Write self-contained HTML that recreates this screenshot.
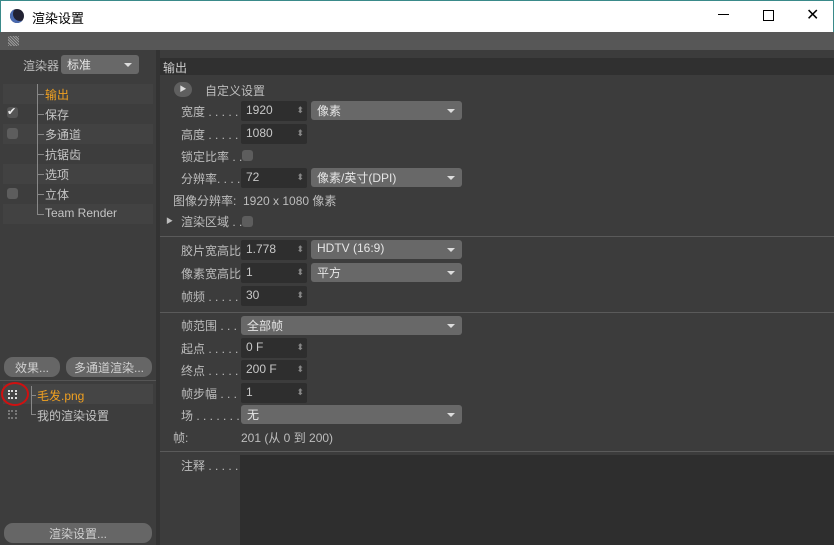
<!DOCTYPE html><html><head><meta charset="utf-8"><style>
*{margin:0;padding:0;box-sizing:border-box}
body{width:834px;height:545px;overflow:hidden;background:#3c3c3c;font-family:"Liberation Sans","Noto Sans CJK SC",sans-serif;font-size:12px;color:#bdbdbd;position:relative}
.a{position:absolute;white-space:nowrap}
.f{position:absolute;height:20px;background:#2e2e2e;border-radius:2px;color:#c8c8c8;padding:2px 0 0 5px;width:66px;left:241px}
.f:after{content:"⬍";position:absolute;right:3px;top:4px;font-size:9px;color:#888}
.d{position:absolute;height:19px;background:#686868;border-radius:3px;color:#e6e6e6;padding:1px 0 0 6px;left:311px;width:151px}
.d:after{content:"";position:absolute;right:7px;top:8px;border:4px solid transparent;border-top:4px solid #ddd}
.l{position:absolute;left:181px;color:#bdbdbd}
.sep{position:absolute;left:160px;right:0;height:1px;background:#5a5a5a}
.row{position:absolute;left:3px;width:150px;height:20px}
.tk{position:absolute;left:37px;width:7px;height:1px;background:#888}
.cb{position:absolute;width:11px;height:11px;background:#5d5d5d;border-radius:3px}
.btn{position:absolute;height:20px;background:#666;border-radius:9px;color:#d0d0d0;text-align:center;padding-top:2px}
</style></head><body>
<div class="a" style="left:0;top:0;width:834px;height:32px;background:#fff;border:1px solid #3a8a8a;border-bottom:none"></div>
<div class="a" style="left:10px;top:9px;width:14px;height:14px;border-radius:50%;background:#223;box-shadow:inset 3px -2px 0 #4a6ab0"></div>
<div class="a" style="left:32px;top:8px;color:#000;font-size:13px">渲染设置</div>
<div class="a" style="left:718px;top:14px;width:11px;height:1px;background:#000"></div>
<div class="a" style="left:763px;top:10px;width:11px;height:11px;border:1px solid #000"></div>
<div class="a" style="left:806px;top:5px;color:#000;font-size:16px">✕</div>
<div class="a" style="left:0;top:32px;width:834px;height:18px;background:#575757"></div>
<div class="a" style="left:8px;top:36px;width:11px;height:10px;background:repeating-linear-gradient(45deg,#999 0 1px,#575757 1px 2px)"></div>
<div class="a" style="left:0;top:50px;width:156px;height:495px;background:#3d3d3d"></div>
<div class="a" style="left:156px;top:50px;width:4px;height:495px;background:#333"></div>
<div class="a" style="left:23px;top:57px">渲染器</div>
<div class="d" style="left:61px;top:55px;width:78px">标准</div>
<div class="row" style="top:84px;background:#424242"></div>
<div class="row" style="top:124px;background:#424242"></div>
<div class="row" style="top:164px;background:#424242"></div>
<div class="row" style="top:204px;background:#424242"></div>
<div class="a" style="left:37px;top:84px;width:1px;height:130px;background:#888"></div>
<div class="tk" style="top:94px"></div><div class="tk" style="top:114px"></div><div class="tk" style="top:134px"></div><div class="tk" style="top:154px"></div><div class="tk" style="top:174px"></div><div class="tk" style="top:194px"></div><div class="tk" style="top:214px"></div>
<div class="a" style="left:45px;top:86px;color:#f0a020">输出</div>
<div class="a" style="left:45px;top:106px;color:#c4c4c4">保存</div>
<div class="a" style="left:45px;top:126px;color:#c4c4c4">多通道</div>
<div class="a" style="left:45px;top:146px;color:#c4c4c4">抗锯齿</div>
<div class="a" style="left:45px;top:166px;color:#c4c4c4">选项</div>
<div class="a" style="left:45px;top:186px;color:#c4c4c4">立体</div>
<div class="a" style="left:45px;top:206px;color:#c4c4c4">Team Render</div>
<div class="cb" style="left:7px;top:107px;background:#555;color:#eee;font-size:11px;line-height:11px">✔</div>
<div class="cb" style="left:7px;top:128px"></div>
<div class="cb" style="left:7px;top:188px"></div>
<div class="btn" style="left:4px;top:357px;width:56px">效果...</div>
<div class="btn" style="left:66px;top:357px;width:86px">多通道渲染...</div>
<div class="a" style="left:0;top:380px;width:156px;height:1px;background:#555"></div>
<div class="row" style="top:384px;background:#454545"></div>
<div class="a" style="left:31px;top:386px;width:1px;height:28px;background:#888"></div>
<div class="a" style="left:31px;top:395px;width:5px;height:1px;background:#888"></div>
<div class="a" style="left:31px;top:414px;width:5px;height:1px;background:#888"></div>
<div class="a" style="left:37px;top:387px;color:#f0a020">毛发.png</div>
<div class="a" style="left:37px;top:407px;color:#c4c4c4">我的渲染设置</div>
<div class="a" style="left:8px;top:390px;width:9px;height:9px;border:2px dotted #ddd"></div>
<div class="a" style="left:8px;top:410px;width:9px;height:9px;border:2px dotted #777"></div>
<div class="a" style="left:1px;top:382px;width:28px;height:24px;border:2px solid #d01010;border-radius:50%"></div>
<div class="btn" style="left:4px;top:523px;width:148px">渲染设置...</div>
<div class="a" style="left:160px;top:58px;width:674px;height:17px;background:#303030;padding:1px 0 0 3px;color:#ccc">输出</div>
<div class="a" style="left:174px;top:82px;width:18px;height:15px;border-radius:8px;background:#5f5f5f;color:#ddd;font-size:7px;text-align:center;line-height:15px">▶</div>
<div class="a" style="left:205px;top:82px">自定义设置</div>
<div class="l" style="top:103px">宽度 . . . . .</div><div class="f" style="top:101px">1920</div><div class="d" style="top:101px">像素</div>
<div class="l" style="top:126px">高度 . . . . .</div><div class="f" style="top:124px">1080</div>
<div class="l" style="top:148px">锁定比率 . .</div><div class="cb" style="left:242px;top:150px"></div>
<div class="l" style="top:170px">分辨率. . . .</div><div class="f" style="top:168px">72</div><div class="d" style="top:168px">像素/英寸(DPI)</div>
<div class="a" style="left:173px;top:192px">图像分辨率:&nbsp; 1920 x 1080 像素</div>
<div class="a" style="left:166px;top:216px;font-size:7px">▶</div>
<div class="l" style="top:213px">渲染区域 . .</div><div class="cb" style="left:242px;top:216px"></div>
<div class="sep" style="top:236px"></div>
<div class="l" style="top:242px">胶片宽高比</div><div class="f" style="top:240px">1.778</div><div class="d" style="top:240px">HDTV (16:9)</div>
<div class="l" style="top:265px">像素宽高比</div><div class="f" style="top:263px">1</div><div class="d" style="top:263px">平方</div>
<div class="l" style="top:288px">帧频 . . . . .</div><div class="f" style="top:286px">30</div>
<div class="sep" style="top:312px"></div>
<div class="l" style="top:317px">帧范围 . . . .</div><div class="d" style="top:316px;left:241px;width:221px">全部帧</div>
<div class="l" style="top:340px">起点 . . . . .</div><div class="f" style="top:338px">0 F</div>
<div class="l" style="top:362px">终点 . . . . .</div><div class="f" style="top:360px">200 F</div>
<div class="l" style="top:385px">帧步幅 . . . .</div><div class="f" style="top:383px">1</div>
<div class="l" style="top:407px">场 . . . . . . .</div><div class="d" style="top:405px;left:241px;width:221px">无</div>
<div class="a" style="left:173px;top:429px">帧:</div><div class="a" style="left:241px;top:429px">201 (从 0 到 200)</div>
<div class="sep" style="top:451px"></div>
<div class="l" style="top:457px">注释 . . . . .</div>
<div class="a" style="left:240px;top:455px;width:594px;height:90px;background:#2e2e2e"></div>
</body></html>
